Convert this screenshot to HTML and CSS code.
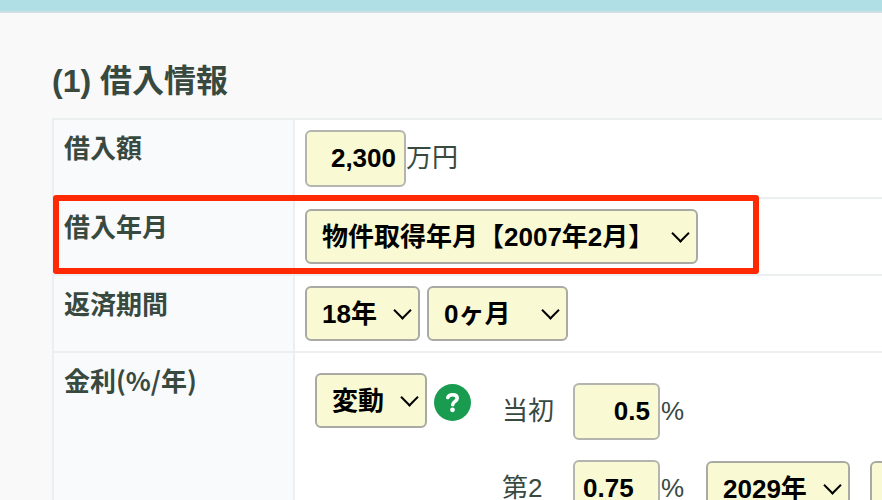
FILE: index.html
```html
<!DOCTYPE html>
<html lang="ja">
<head>
    <meta charset="UTF-8">
    <meta name="viewport" content="width=device-width, initial-scale=1.0">
    <title>借入情報</title>
    <link rel="stylesheet" href="styles.css">
</head>
<body>
    <header class="topbar"></header>

    <main class="content">
        <h2>(1) 借入情報</h2>

        <form>
            <table class="form-table">
                <tr>
                    <th><label for="amount">借入額</label></th>
                    <td>
                        <div class="field">
                            <input type="text" id="amount" class="amount" value="2,300">
                            <span>万円</span>
                        </div>
                    </td>
                </tr>
                <tr>
                    <th class="marked"><label for="start">借入年月</label></th>
                    <td>
                        <div class="field">
                            <span class="select start">
                                <select id="start"><option>物件取得年月【2007年2月】</option></select>
                            </span>
                        </div>
                    </td>
                </tr>
                <tr>
                    <th><label for="years">返済期間</label></th>
                    <td>
                        <div class="field period">
                            <span class="select years">
                                <select id="years"><option>18年</option></select>
                            </span>
                            <span class="select months">
                                <select aria-label="ヶ月"><option>0ヶ月</option></select>
                            </span>
                        </div>
                    </td>
                </tr>
                <tr>
                    <th><label for="rateType">金利(%/年)</label></th>
                    <td>
                        <div class="rates">
                            <div class="rate-type">
                                <span class="select type">
                                    <select id="rateType"><option>変動</option></select>
                                </span>
                                <button type="button" class="help" aria-label="ヘルプ">
                                    <svg width="37" height="37" viewBox="0 0 37 37" fill="none">
                                        <circle cx="18.5" cy="18.5" r="18.5" fill="#1a9c50"/>
                                        <path d="M13.8 13.5C14.5 11.4 16.2 10.7 18.6 10.7C21.3 10.7 23.2 12 23.2 14.3C23.2 17.5 18.7 17.3 18.7 20.8" stroke="#fff" stroke-width="3.6" stroke-linecap="round"/>
                                        <circle cx="18.5" cy="25.8" r="2.4" fill="#fff"/>
                                    </svg>
                                </button>
                            </div>
                            <div class="rate-list">
                                <div class="rate-row">
                                    <label for="rate1">当初</label>
                                    <input type="text" id="rate1" class="rate" value="0.5">
                                    <span class="unit">%</span>
                                </div>
                                <div class="rate-row">
                                    <label for="rate2">第2</label>
                                    <input type="text" id="rate2" class="rate left" value="0.75">
                                    <span class="unit">%</span>
                                    <span class="select year">
                                        <select aria-label="年"><option>2029年</option></select>
                                    </span>
                                    <span class="select month">
                                        <select aria-label="月"><option>2月</option></select>
                                    </span>
                                </div>
                            </div>
                        </div>
                    </td>
                </tr>
            </table>
        </form>
    </main>
</body>
</html>
```
FILE: styles.css
```css
*, *::after { box-sizing: border-box; }
body { margin: 0; background: #f9f9f9; color: #384a3f; font-family: "Liberation Sans", "Noto Sans CJK JP", sans-serif; font-size: 26px; line-height: 39px; overflow: hidden; }

.topbar { height: 13px; background: #b0e0e5; border-bottom: 2px solid #d0dfe2; }
.content { padding: 44px 0 0 52px; }
h2 { margin: 0 0 13px; font-size: 32px; line-height: 48px; }

/* table runs past the right edge on narrow windows */
.form-table { width: 100%; min-width: 1000px; border-collapse: collapse; background: #fff; }
.form-table th, .form-table td { border: 2px solid #ebefef; padding: 10px; vertical-align: top; text-align: left; }
.form-table th { width: 241px; background: #f9fafc; font-family: "Noto Sans CJK JP", sans-serif; font-weight: bold; line-height: 33px; }
.form-table label { display: block; }

.marked { position: relative; }
.marked::after { content: ""; position: absolute; top: -4px; left: -1px; width: 706px; height: 79px; border: 6px solid #ff2a04; border-radius: 3px; pointer-events: none; }

.field, .rate-row, .rate-type { display: flex; align-items: center; }
.period { gap: 7px; }

input, select { font-family: inherit; font-size: 26px; font-weight: bold; color: #000; background: #f9f9d3; border: 2px solid #aaaaa4; border-radius: 6px; margin: 0; }
input { height: 57px; padding: 0 8px; text-align: right; border-color: #b5b5b0; }
select { appearance: none; width: 100%; height: 55px; padding: 0 15px; }
.amount { width: 101px; }
.rate { width: 87px; }
.left { text-align: left; }

.select { position: relative; display: block; height: 55px; }
.select::after { content: ""; position: absolute; top: 18px; right: 11px; width: 13px; height: 13px; border: solid #000; border-width: 0 2px 2px 0; transform: rotate(45deg); pointer-events: none; }
.start { width: 393px; }
.years { width: 115px; }
.months { width: 141px; }
.type { width: 112px; }
.year { width: 144px; margin-right: 20px; }
.month { width: 112px; }

.rates { display: flex; align-items: flex-start; gap: 31px; padding: 10px; }
.rate-type { gap: 7px; }
.help { width: 37px; height: 37px; margin-top: 4px; padding: 0; border: 0; background: none; }
.help svg { display: block; }
.rate-list { display: grid; gap: 20px; padding: 10px 0; }
.rate-row label { width: 71px; }
.unit { width: 46px; padding-left: 1px; }
```
